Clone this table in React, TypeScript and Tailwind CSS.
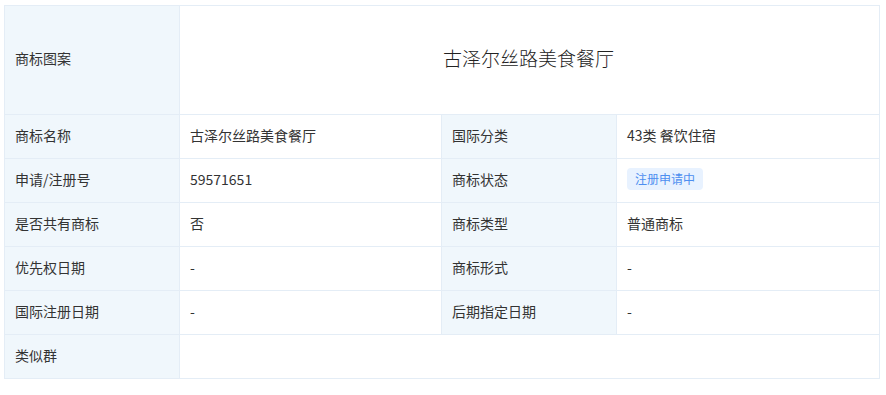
import React from 'react';

const rows: [string, React.ReactNode, string, React.ReactNode][] = [
  ['商标名称', '古泽尔丝路美食餐厅', '国际分类', '43类 餐饮住宿'],
  [
    '申请/注册号',
    '59571651',
    '商标状态',
    <span className="inline-block h-[22px] rounded-sm bg-[#e8f2ff] px-2 text-xs leading-[22px] text-[#4d8ef0]">注册申请中</span>,
  ],
  ['是否共有商标', '否', '商标类型', '普通商标'],
  ['优先权日期', '-', '商标形式', '-'],
  ['国际注册日期', '-', '后期指定日期', '-'],
];

const label = 'border border-[#e4edf6] bg-[#f0f7fc] pl-[10px] pr-3 pb-1 text-left font-normal';
const cell = 'border border-[#e4edf6] bg-white pl-[10px] pr-3 pb-1';

export default function App() {
  return (
    <div
      className="bg-white pl-[4px] pt-[5px] text-sm text-[#333]"
      style={{ fontFamily: '"Noto Sans CJK SC", "Noto Sans", sans-serif' }}
    >
      <table className="w-[875px] table-fixed border-collapse">
        <colgroup>
          <col className="w-[175px]" />
          <col className="w-[262px]" />
          <col className="w-[175px]" />
          <col className="w-[263px]" />
        </colgroup>
        <tbody>
          <tr className="h-[109px]">
            <th className={label}>商标图案</th>
            <td colSpan={3} className={cell + ' text-center text-[19px] font-light text-[#222]'}>
              古泽尔丝路美食餐厅
            </td>
          </tr>
          {rows.map(([a, b, c, d]) => (
            <tr key={a} className="h-[44px]">
              <th className={label}>{a}</th>
              <td className={cell}>{b}</td>
              <th className={label}>{c}</th>
              <td className={cell}>{d}</td>
            </tr>
          ))}
          <tr className="h-[44px]">
            <th className={label}>类似群</th>
            <td colSpan={3} className={cell}></td>
          </tr>
        </tbody>
      </table>
    </div>
  );
}
